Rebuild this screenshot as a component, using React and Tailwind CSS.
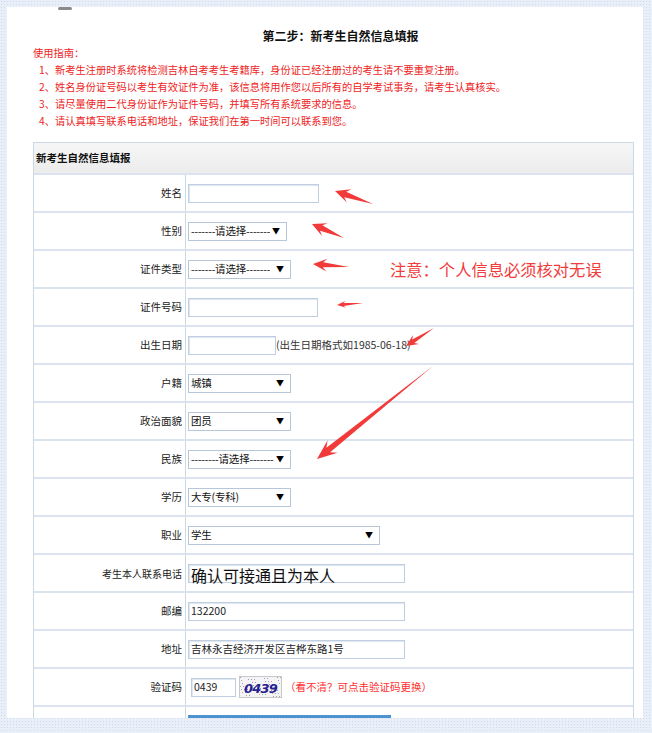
import React from 'react';

const font = "font-['Noto_Sans_CJK_SC','Noto_Sans',sans-serif]";

const guide = [
  '1、新考生注册时系统将检测吉林自考考生考籍库，身份证已经注册过的考生请不要重复注册。',
  '2、姓名身份证号码以考生有效证件为准，该信息将用作您以后所有的自学考试事务，请考生认真核实。',
  '3、请尽量使用二代身份证作为证件号码，并填写所有系统要求的信息。',
  '4、请认真填写联系电话和地址，保证我们在第一时间可以联系到您。',
];

// tapered red arrow: tip -> tail
function arrowPoints(tip, tail, headLen, headW, neckW) {
  const dx = tail[0] - tip[0];
  const dy = tail[1] - tip[1];
  const len = Math.hypot(dx, dy);
  const ux = dx / len, uy = dy / len;
  const nx = -uy, ny = ux;
  const p = (a, b) => `${(tip[0] + ux * a + nx * b).toFixed(1)},${(tip[1] + uy * a + ny * b).toFixed(1)}`;
  return [
    p(0, 0),
    p(headLen, headW),
    p(headLen * 0.72, neckW),
    `${tail[0]},${tail[1]}`,
    p(headLen * 0.72, -neckW),
    p(headLen, -headW),
  ].join(' ');
}

const arrows = [
  { tip: [335, 191], tail: [373, 204], h: 15, w: 7, n: 3 },
  { tip: [312, 224], tail: [344, 238], h: 14, w: 7, n: 3 },
  { tip: [313, 264], tail: [349, 267], h: 14, w: 6.5, n: 2.5 },
  { tip: [337, 305], tail: [363, 303], h: 9, w: 3.5, n: 1.5 },
  { tip: [406, 346], tail: [434, 328], h: 12, w: 5.5, n: 2 },
  { tip: [317, 459], tail: [433, 366], h: 20, w: 8, n: 3 },
];

function TextBox({ w, value, big }) {
  return (
    <div
      className={`h-[19px] border border-[#bfcfe1] bg-white shadow-[inset_1px_1px_1px_#dde5ee] flex items-center pl-[2px] whitespace-nowrap ${big ? 'text-[16px] leading-none pt-[4px] text-[#111] overflow-visible' : 'text-[10.5px] text-[#222] overflow-hidden'}`}
      style={{ width: w }}
    >
      {value}
    </div>
  );
}

function SelectBox({ w, value }) {
  return (
    <div
      className="h-[19px] border border-[#b7c7da] bg-white flex items-center justify-between pl-[2px] pr-[6px] text-[10.5px] text-[#111] whitespace-nowrap"
      style={{ width: w }}
    >
      <span className="overflow-hidden tracking-[-0.2px]">{value}</span>
      <span className="ml-[2px] text-[8px] text-black">▼</span>
    </div>
  );
}

function Row({ label, children, small }) {
  return (
    <div className="grid grid-cols-[152px_1fr] h-[38px] border-b-2 border-[#dbe3ee]">
      <div className={`flex items-center justify-end pr-[3px] border-r border-[#cdd8e6] text-[#222] ${small ? 'text-[10px]' : 'text-[10.5px]'}`}>
        {label}
      </div>
      <div className="flex items-center pl-[2px]">{children}</div>
    </div>
  );
}

function Captcha() {
  const dots = [];
  const colors = ['#8aa', '#a8c', '#c99', '#9b9', '#99c'];
  for (let i = 0; i < 60; i++) {
    const x = (i * 37) % 43;
    const y = (i * 13) % 22;
    dots.push(<rect key={i} x={x} y={y} width="1" height="1" fill={colors[i % 5]} />);
  }
  return (
    <div className="relative w-[43px] h-[22px] border border-[#c8c8c8] bg-[#f4f4f6] ml-[3px] overflow-hidden">
      <svg width="43" height="22" className="absolute inset-0">
        {dots}
      </svg>
      <span className="absolute left-[4px] top-[2px] text-[13px] font-bold italic text-[#2a1f8f] font-['DejaVu_Sans',sans-serif] tracking-[-0.8px]">
        0439
      </span>
    </div>
  );
}

export default function App() {
  return (
    <div className={`relative w-[652px] h-[733px] overflow-hidden bg-[#e9eff8] [background-image:radial-gradient(#d0dcee_1px,transparent_1px)] [background-size:3px_3px] pt-[7px] pl-[7px] ${font}`}>
      <div className="w-[636px] h-[711px] bg-white overflow-hidden pl-[26px] pr-[9px]">
        <div className="ml-[25px] w-[14px] h-[3px] rounded-full bg-[#8a8a8a] blur-[0.6px]" />
        <div className="pt-[17px] h-[34px] text-center pl-[14px] text-[12px] font-bold text-[#111] leading-[17px]">
          第二步：新考生自然信息填报
        </div>
        <div className="text-[10.25px] leading-[17px] text-[#ee1d1d]">
          <div>使用指南：</div>
          {guide.map((g) => (
            <div key={g} className="pl-[6px]">{g}</div>
          ))}
        </div>

        <div className="mt-[13px] w-[601px] border-x border-t border-[#cdd8e6]">
          <div className="h-[32px] flex items-center pl-[2px] border-b-2 border-[#dbe3ee] bg-gradient-to-b from-[#f6f6f6] to-[#ececec] text-[10.5px] font-bold text-[#111]">
            新考生自然信息填报
          </div>
          <Row label="姓名"><TextBox w={131} /></Row>
          <Row label="性别"><SelectBox w={99} value="-------请选择-------" /></Row>
          <Row label="证件类型">
            <SelectBox w={103} value="-------请选择-------" />
            <span className="ml-[99px] text-[16.3px] text-[#f03c3c] whitespace-nowrap">注意：个人信息必须核对无误</span>
          </Row>
          <Row label="证件号码"><TextBox w={130} /></Row>
          <Row label="出生日期">
            <TextBox w={88} />
            <span className="text-[10.5px] text-[#333] whitespace-nowrap">(出生日期格式如1985-06-18)</span>
          </Row>
          <Row label="户籍"><SelectBox w={103} value="城镇" /></Row>
          <Row label="政治面貌"><SelectBox w={103} value="团员" /></Row>
          <Row label="民族"><SelectBox w={103} value="--------请选择-------" /></Row>
          <Row label="学历"><SelectBox w={103} value="大专(专科)" /></Row>
          <Row label="职业"><SelectBox w={192} value="学生" /></Row>
          <Row label="考生本人联系电话" small><TextBox w={217} value="确认可接通且为本人" big /></Row>
          <Row label="邮编"><TextBox w={217} value="132200" /></Row>
          <Row label="地址"><TextBox w={217} value="吉林永吉经济开发区吉桦东路1号" /></Row>
          <Row label="验证码">
            <div className="ml-[3px]"><TextBox w={45} value="0439" /></div>
            <Captcha />
            <span className="ml-[3px] text-[10.5px] text-[#ff2f2f] whitespace-nowrap">（看不清？可点击验证码更换）</span>
          </Row>
          <div className="grid grid-cols-[152px_1fr] h-[40px]">
            <div className="border-r border-[#cdd8e6]" />
            <div className="pl-[2px] pt-[8px]">
              <div className="w-[203px] h-[24px] bg-gradient-to-b from-[#4f95d0] to-[#2f73b5]" />
            </div>
          </div>
        </div>
      </div>

      <svg width="652" height="733" className="absolute inset-0 pointer-events-none">
        {arrows.map((a, i) => (
          <polygon key={i} points={arrowPoints(a.tip, a.tail, a.h, a.w, a.n)} fill="#f13b3b" />
        ))}
      </svg>
    </div>
  );
}
